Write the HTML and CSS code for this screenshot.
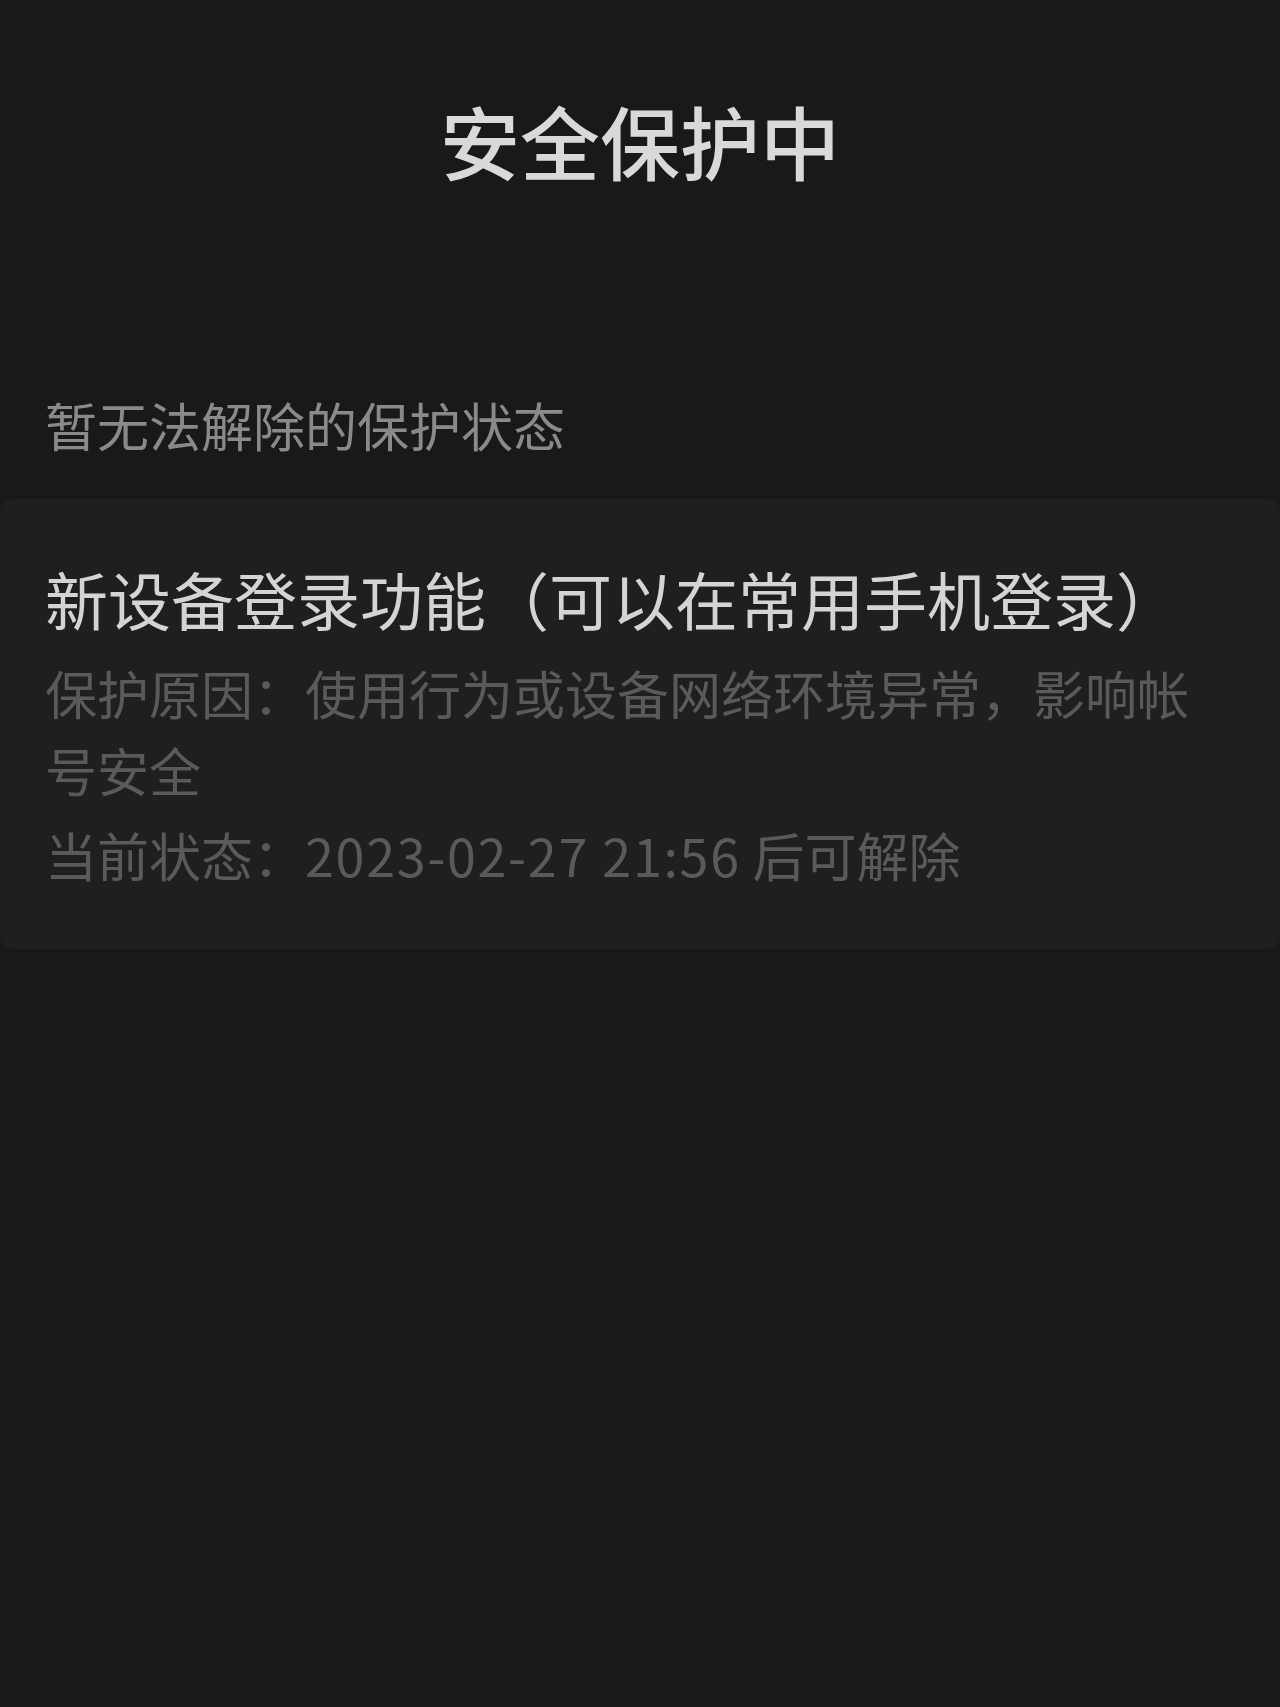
FILE: index.html
```html
<!DOCTYPE html>
<html lang="zh-CN">
<head>
<meta charset="utf-8">
<title>安全保护中</title>
<link rel="stylesheet" href="styles.css">
</head>
<body>
<div class="page">
  <header class="header">
    <h1 class="title">安全保护中</h1>
  </header>
  <h2 class="section-label">暂无法解除的保护状态</h2>
  <section class="card">
    <h3 class="card-title">新设备登录功能（可以在常用手机登录）</h3>
    <p class="card-line">保护原因：使用行为或设备网络环境异常，影响帐号安全</p>
    <p class="card-line card-status">当前状态：<span class="date">2023-02-27 21:56</span> 后可解除</p>
  </section>
</div>
</body>
</html>
```

FILE: styles.css
```css
html, body {
  margin: 0;
  padding: 0;
  background: #191919;
}
body {
  font-family: "Noto Sans CJK SC", "Noto Sans", sans-serif;
  min-height: 1707px;
}
.page {
  display: flex;
  flex-direction: column;
}
.header {
  padding-top: 99px;
  display: flex;
  justify-content: center;
}
.title {
  margin: 0;
  font-size: 80px;
  line-height: 80px;
  font-weight: 500;
  color: #d9d9d9;
}
.section-label {
  margin: 220px 0 0 0;
  padding: 0 45px;
  font-size: 52px;
  line-height: 52px;
  font-weight: 400;
  color: #8a8a8a;
}
.card {
  margin-top: 48px;
  background: #1f1f1f;
  border-radius: 12px;
  padding: 67px 45px 56px 45px;
}
.card-title {
  margin: 0;
  font-size: 63px;
  line-height: 63px;
  font-weight: 400;
  color: #d4d4d4;
}
.card-line {
  margin: 25px 0 0 0;
  font-size: 52px;
  line-height: 77px;
  color: #5a5a5a;
}
.card-status {
  margin-top: 8px;
}
.date {
  letter-spacing: 1.7px;
}
```
